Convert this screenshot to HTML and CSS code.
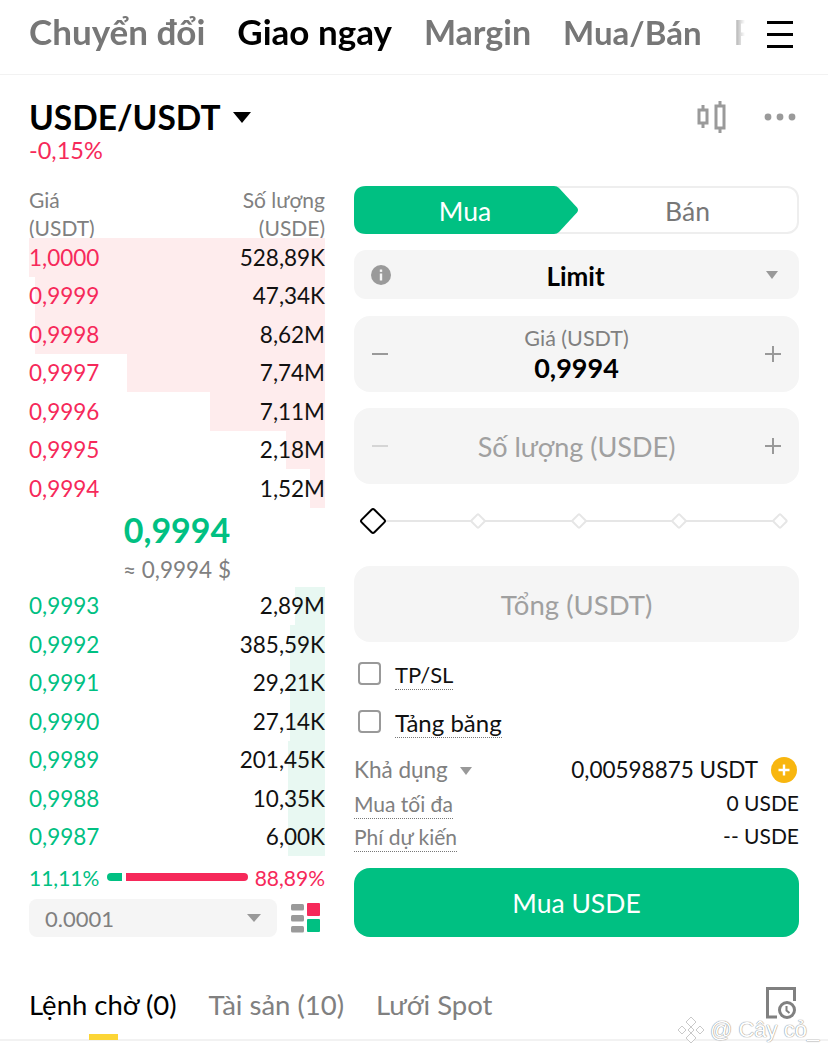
FILE: index.html
```html
<!DOCTYPE html>
<html lang="vi">

<head>
  <title>USDE/USDT</title>
  <meta charset="utf-8">
  <meta name="viewport" content="width=device-width, initial-scale=1.0">
  <link rel="stylesheet" href="styles.css">
</head>

<body>
  <header class="top-bar">
    <nav class="top-tabs">
      <span>Chuyển đổi</span>
      <span class="active">Giao ngay</span>
      <span class="tab-margin">Margin</span>
      <span class="tab-trade">Mua/Bán</span>
      <span class="cut">P2P</span>
    </nav>
    <svg class="menu-icon" width="26" height="28" viewBox="0 0 26 28">
      <path d="M0 2.5H26M0 14.5H26M0 26.5H26" stroke="#000" stroke-width="3" />
    </svg>
  </header>

  <section class="pair-bar">
    <div>
      <div class="pair-name">USDE/USDT <i class="pair-caret"></i></div>
      <div class="pair-change">-0,15%</div>
    </div>
    <div class="pair-tools">
      <svg width="30" height="32" viewBox="0 0 30 32" fill="none" stroke="#9a9a9a" stroke-width="3">
        <rect x="2" y="9" width="8" height="13" />
        <path d="M6 4V9M6 22V27" />
        <rect x="19" y="5" width="8" height="22" />
        <path d="M23 0V5M23 27V32" />
      </svg>
      <svg width="32" height="8" viewBox="0 0 32 8" fill="#9a9a9a">
        <circle cx="4" cy="4" r="3.4" />
        <circle cx="16" cy="4" r="3.4" />
        <circle cx="28" cy="4" r="3.4" />
      </svg>
    </div>
  </section>

  <main class="trade">
    <section class="book">
      <div class="book-head">
        <span>Giá<br>(USDT)</span>
        <span class="right">Số lượng<br>(USDE)</span>
      </div>

      <div class="rows asks">
        <div class="row"><i class="depth" style="width:296px"></i><span class="price">1,0000</span><span>528,89K</span></div>
        <div class="row"><i class="depth" style="width:290px"></i><span class="price">0,9999</span><span>47,34K</span></div>
        <div class="row"><i class="depth" style="width:290px"></i><span class="price">0,9998</span><span>8,62M</span></div>
        <div class="row"><i class="depth" style="width:198px"></i><span class="price">0,9997</span><span>7,74M</span></div>
        <div class="row"><i class="depth" style="width:115px"></i><span class="price">0,9996</span><span>7,11M</span></div>
        <div class="row"><i class="depth" style="width:39px"></i><span class="price">0,9995</span><span>2,18M</span></div>
        <div class="row"><i class="depth" style="width:15px"></i><span class="price">0,9994</span><span>1,52M</span></div>
      </div>

      <div class="mid">
        <div class="mid-price">0,9994</div>
        <div class="mid-usd">≈ 0,9994 $</div>
      </div>

      <div class="rows bids">
        <div class="row"><i class="depth" style="width:30px"></i><span class="price">0,9993</span><span>2,89M</span></div>
        <div class="row"><i class="depth" style="width:35px"></i><span class="price">0,9992</span><span>385,59K</span></div>
        <div class="row"><i class="depth" style="width:35px"></i><span class="price">0,9991</span><span>29,21K</span></div>
        <div class="row"><i class="depth" style="width:35px"></i><span class="price">0,9990</span><span>27,14K</span></div>
        <div class="row"><i class="depth" style="width:37px"></i><span class="price">0,9989</span><span>201,45K</span></div>
        <div class="row"><i class="depth" style="width:37px"></i><span class="price">0,9988</span><span>10,35K</span></div>
        <div class="row"><i class="depth" style="width:37px"></i><span class="price">0,9987</span><span>6,00K</span></div>
      </div>

      <div class="ratio">
        <span class="buy-text">11,11%</span>
        <i class="ratio-buy"></i>
        <i class="ratio-sell"></i>
        <span class="sell-text">88,89%</span>
      </div>

      <div class="book-foot">
        <div class="step-select">0.0001 <i class="caret"></i></div>
        <svg width="30" height="30" viewBox="0 0 30 30">
          <rect x="0" y="1" width="13" height="6.5" rx="1.5" fill="#9a9a9a" />
          <rect x="0" y="12" width="13" height="6.5" rx="1.5" fill="#9a9a9a" />
          <rect x="0" y="23" width="13" height="6.5" rx="1.5" fill="#9a9a9a" />
          <rect x="16" y="0" width="13" height="13" rx="1" fill="#f6295a" />
          <rect x="16" y="16" width="13" height="13" rx="1" fill="#00c082" />
        </svg>
      </div>
    </section>

    <section class="form">
      <div class="side-switch">
        <svg class="side-arrow" width="225" height="48" viewBox="0 0 225 48">
          <path d="M12 0H200Q203 0 205 2L223 21.5Q225 24 223 26.5L205 46Q203 48 200 48H12Q0 48 0 36V12Q0 0 12 0Z" fill="#00c082" />
        </svg>
        <span class="side-buy">Mua</span>
        <span class="side-sell">Bán</span>
      </div>

      <div class="field limit-field">
        <svg width="20" height="20" viewBox="0 0 20 20">
          <circle cx="10" cy="10" r="10" fill="#9a9a9a" />
          <rect x="8.8" y="8.5" width="2.4" height="7" fill="#f5f5f5" />
          <rect x="8.8" y="4.5" width="2.4" height="2.4" fill="#f5f5f5" />
        </svg>
        <span class="limit-text">Limit</span>
        <i class="caret small"></i>
      </div>

      <div class="field step-field price-field">
        <i class="minus"></i>
        <div class="field-mid">
          <div class="field-label">Giá (USDT)</div>
          <div class="field-value">0,9994</div>
        </div>
        <i class="plus"></i>
      </div>

      <div class="field step-field">
        <i class="minus faint"></i>
        <div class="field-mid placeholder">Số lượng (USDE)</div>
        <i class="plus"></i>
      </div>

      <div class="slider">
        <i class="knob"></i>
        <i class="tick"></i>
        <i class="tick"></i>
        <i class="tick"></i>
        <i class="tick"></i>
      </div>

      <div class="field total-field placeholder">Tổng (USDT)</div>

      <label class="check first"><i class="box"></i><span class="dotted caps">TP/SL</span></label>
      <label class="check"><i class="box"></i><span class="dotted">Tảng băng</span></label>

      <div class="info avail">
        <span class="muted">Khả dụng <i class="caret small"></i></span>
        <span class="avail-value">0,00598875 USDT
          <svg width="26" height="26" viewBox="0 0 26 26">
            <circle cx="13" cy="13" r="13" fill="#f8b60f" />
            <path d="M13 7.5V18.5M7.5 13H18.5" stroke="#fff" stroke-width="2.4" />
          </svg>
        </span>
      </div>
      <div class="info">
        <span class="muted dotted">Mua tối đa</span>
        <span>0 USDE</span>
      </div>
      <div class="info">
        <span class="muted dotted">Phí dự kiến</span>
        <span>-- USDE</span>
      </div>

      <button class="buy-button">Mua USDE</button>
    </section>
  </main>

  <footer class="bottom-tabs">
    <span class="active">Lệnh chờ (0)</span>
    <span>Tài sản (10)</span>
    <span>Lưới Spot</span>
    <svg class="history-icon" width="30" height="33" viewBox="0 0 30 33" fill="none" stroke="#808080" stroke-width="3">
      <path d="M11 30H1.5V1.5H28.5V14" />
      <circle cx="21" cy="23" r="7.5" fill="#fff" />
      <path d="M20.5 19V23.5L23.5 26" stroke-width="2" />
    </svg>
  </footer>

  <div class="watermark">
    <svg width="28" height="28" viewBox="0 0 28 28" fill="#fff" stroke="#c9c9c9" stroke-width="1">
      <path d="M14 1L19 6L14 11L9 6Z" />
      <path d="M5 10L9 14L5 18L1 14Z" />
      <path d="M23 10L27 14L23 18L19 14Z" />
      <path d="M14 17L19 22L14 27L9 22Z" />
      <path d="M14 11L17 14L14 17L11 14Z" />
    </svg>
    <span>@ Cây cỏ_</span>
  </div>
</body>

</html>
```

FILE: styles.css
```css
* {
  box-sizing: border-box;
}

body {
  margin: 0;
  height: 1056px;
  overflow: hidden;
  position: relative;
  background: #fff;
  color: #111;
  font-family: Lato, "Noto Sans", sans-serif;
}

i {
  display: block;
}

/* top bar */
.top-bar {
  height: 75px;
  display: flex;
  align-items: center;
  padding-left: 29px;
  border-bottom: 1px solid #f2f2f2;
}

.top-tabs {
  width: 716px;
  height: 44px;
  display: flex;
  align-items: baseline;
  gap: 32px;
  overflow: hidden;
  white-space: nowrap;
  font-size: 35px;
  font-weight: 700;
  color: #777;
  position: relative;
  top: -5px;
  -webkit-mask-image: linear-gradient(to right, #000 706px, transparent 716px);
}

.top-tabs span {
  flex-shrink: 0;
}

.top-tabs .active {
  color: #000;
}

.top-tabs .tab-margin {
  font-size: 34px;
}

.top-tabs .tab-trade {
  font-size: 33px;
}

.top-tabs .cut {
  opacity: 0.6;
}

.menu-icon {
  margin-left: 22px;
  margin-top: -7px;
}

/* pair */
.pair-bar {
  height: 97px;
  padding: 22px 29px 0;
  display: flex;
  justify-content: space-between;
}

.pair-name {
  display: flex;
  align-items: center;
  gap: 12px;
  font-size: 33.5px;
  font-weight: 700;
  color: #000;
  line-height: 40px;
}

.pair-caret {
  width: 0;
  height: 0;
  border-left: 9px solid transparent;
  border-right: 9px solid transparent;
  border-top: 11px solid #000;
}

.pair-change {
  color: #f6295a;
  font-size: 23.5px;
  line-height: 26px;
}

.pair-tools {
  display: flex;
  align-items: center;
  gap: 37px;
  height: 40px;
  margin-right: 3px;
}

/* two columns */
.trade {
  display: flex;
  gap: 29px;
  padding: 0 29px;
}

/* order book */
.book {
  width: 296px;
  flex-shrink: 0;
  padding-top: 14px;
}

.book-head {
  display: flex;
  justify-content: space-between;
  color: #808080;
  font-size: 21px;
  line-height: 28px;
  height: 52px;
}

.right {
  text-align: right;
}

.row {
  height: 38.5px;
  display: flex;
  align-items: center;
  justify-content: space-between;
  position: relative;
  font-size: 22.5px;
  color: #111;
}

.row span {
  position: relative;
}

.depth {
  position: absolute;
  top: 0;
  right: 0;
  bottom: 0;
}

.asks .depth {
  background: #feeced;
}

.bids .depth {
  background: #e8f8f2;
}

.asks .price {
  color: #f6295a;
}

.bids .price {
  color: #00c082;
}

.mid {
  height: 79px;
  text-align: center;
}

.mid-price {
  color: #00c082;
  font-size: 34px;
  font-weight: 700;
  line-height: 43px;
}

.mid-usd {
  color: #808080;
  font-size: 22.5px;
  line-height: 37px;
}

.ratio {
  display: flex;
  align-items: center;
  height: 44px;
  padding-bottom: 2px;
  font-size: 21px;
}

.buy-text {
  color: #00c082;
  width: 78px;
}

.sell-text {
  color: #f6295a;
  margin-left: auto;
}

.ratio-buy {
  width: 15px;
  height: 8px;
  background: #00c082;
  border-radius: 4px 0 0 4px;
}

.ratio-sell {
  width: 122px;
  height: 8px;
  margin-left: 4px;
  background: #f6295a;
  border-radius: 0 4px 4px 0;
}

.book-foot {
  display: flex;
  align-items: center;
  justify-content: space-between;
  padding-right: 4px;
  margin-top: -1px;
}

.step-select {
  width: 248px;
  height: 38px;
  padding: 0 16px;
  border-radius: 8px;
  background: #f5f5f5;
  color: #808080;
  font-size: 22px;
  display: flex;
  align-items: center;
  justify-content: space-between;
}

.caret {
  width: 0;
  height: 0;
  border-left: 7px solid transparent;
  border-right: 7px solid transparent;
  border-top: 8px solid #999;
}

.caret.small {
  border-left-width: 6.5px;
  border-right-width: 6.5px;
}

/* order form */
.form {
  width: 445px;
  padding-top: 14px;
}

.side-switch {
  height: 48px;
  position: relative;
  display: flex;
  align-items: center;
  padding-top: 2px;
  border: 2px solid #eee;
  border-radius: 12px;
  font-size: 26.5px;
}

.side-arrow {
  position: absolute;
  left: -2px;
  top: -2px;
}

.side-buy {
  width: 218px;
  text-align: center;
  color: #fff;
  position: relative;
}

.side-sell {
  flex: 1;
  padding-left: 4px;
  text-align: center;
  color: #777;
  position: relative;
}

.field {
  background: #f5f5f5;
  border-radius: 16px;
  display: flex;
  align-items: center;
  justify-content: space-between;
  padding: 0 18px;
}

.limit-field {
  height: 49px;
  margin-top: 16px;
  border-radius: 12px;
  padding: 0 21px 0 17px;
  display: grid;
  grid-template-columns: 1fr auto 1fr;
}

.limit-field .caret {
  justify-self: end;
}

.limit-text {
  padding: 3px 0 0 2px;
  font-size: 26px;
  font-weight: 700;
  color: #000;
}

.step-field {
  height: 76px;
  margin-top: 16px;
}

.price-field {
  margin-top: 17px;
}

.field-mid {
  text-align: center;
}

.field-label {
  color: #808080;
  font-size: 21.5px;
  line-height: 28px;
}

.field-value {
  color: #000;
  font-size: 27px;
  font-weight: 700;
  line-height: 32px;
}

.placeholder {
  color: #a0a0a0;
  font-size: 27px;
}

.minus {
  width: 16px;
  height: 2px;
  background: #999;
}

.minus.faint {
  background: #d5d5d5;
}

.plus {
  width: 16px;
  height: 16px;
  background: linear-gradient(#999, #999) center / 100% 2px no-repeat, linear-gradient(#999, #999) center / 2px 100% no-repeat;
}

.slider {
  height: 82px;
  padding: 0 13px 8px 9px;
  display: flex;
  align-items: center;
  justify-content: space-between;
  background: linear-gradient(#e6e6e6, #e6e6e6) center / 100% 2px no-repeat;
  background-origin: content-box;
  background-clip: content-box;
}

.knob {
  width: 20px;
  height: 20px;
  transform: rotate(45deg);
  border: 2.5px solid #000;
  border-radius: 3px;
  background: #fff;
}

.tick {
  width: 12px;
  height: 12px;
  transform: rotate(45deg);
  border: 2px solid #e6e6e6;
  border-radius: 2px;
  background: #fff;
}

.total-field {
  height: 76px;
  justify-content: center;
  font-size: 27.5px;
}

.check {
  display: flex;
  align-items: center;
  gap: 14px;
  height: 48px;
  padding-left: 4px;
  font-size: 24px;
  color: #111;
}

.check.first {
  margin-top: 7px;
}

.caps {
  font-size: 22px;
}

.box {
  width: 23px;
  height: 23px;
  border: 2px solid #999;
  border-radius: 4px;
}

.dotted {
  border-bottom: 1px dotted #777;
  line-height: 28px;
  margin-top: 4px;
}

.info {
  display: flex;
  justify-content: space-between;
  align-items: center;
  font-size: 21px;
  height: 33px;
}

.avail {
  margin-top: 8px;
  font-size: 22.5px;
}

.muted {
  color: #808080;
}

.muted .caret {
  display: inline-block;
  margin: 0 0 3px 6px;
}

.avail-value {
  display: flex;
  align-items: center;
  gap: 13px;
  margin-right: 2px;
}

.buy-button {
  display: block;
  width: 100%;
  height: 69px;
  margin-top: 16px;
  border: none;
  border-radius: 16px;
  background: #00c082;
  color: #fff;
  font-family: inherit;
  font-size: 26.5px;
}

/* bottom tabs */
.bottom-tabs {
  position: relative;
  height: 74px;
  margin-top: 30px;
  display: flex;
  align-items: center;
  gap: 32px;
  padding: 2px 29px 0;
  border-bottom: 2px solid #f2f2f2;
  color: #808080;
  font-size: 27.5px;
}

.bottom-tabs .active {
  color: #000;
}

.bottom-tabs .active::after {
  content: "";
  position: absolute;
  left: 89px;
  bottom: -1px;
  width: 29px;
  height: 6px;
  background: #fcd535;
}

.history-icon {
  margin-left: auto;
  margin-right: 3px;
  margin-top: -1px;
}

/* sits on top of the screenshot corner */
.watermark {
  position: absolute;
  left: 677px;
  top: 1016px;
  display: flex;
  align-items: center;
  gap: 5px;
  color: #fff;
  font-family: "Liberation Sans", sans-serif;
  font-size: 22px;
  text-shadow: 0 0 1px #888, 0 0 1px #888;
}
```
